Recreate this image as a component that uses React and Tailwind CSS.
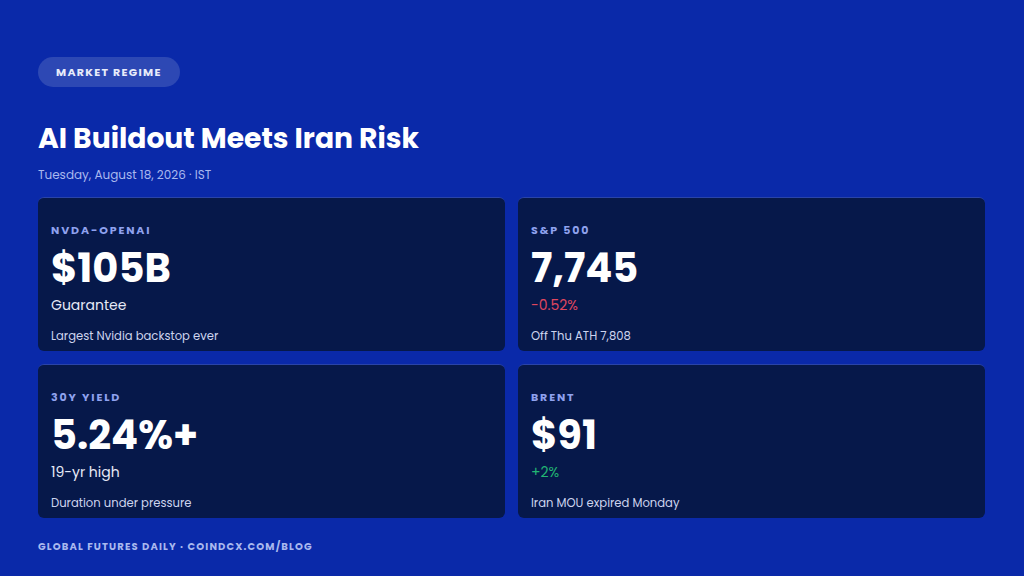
const cards = [
  { label: "NVDA-OPENAI", value: "$105B", note: "Guarantee", noteClass: "text-[#e6eaf7]", sub: "Largest Nvidia backstop ever" },
  { label: "S&P 500", value: "7,745", note: "-0.52%", noteClass: "text-[#e0475f]", sub: "Off Thu ATH 7,808" },
  { label: "30Y YIELD", value: "5.24%+", note: "19-yr high", noteClass: "text-[#e6eaf7]", sub: "Duration under pressure" },
  { label: "BRENT", value: "$91", note: "+2%", noteClass: "text-[#22b573]", sub: "Iran MOU expired Monday" },
];

function StatCard({ label, value, note, noteClass, sub }) {
  return (
    <div className="flex h-[154px] flex-col rounded-md border-t border-[#2a44a8] bg-[#06184a] px-[13px] pt-[24px]">
      <div className="text-[11px] font-bold leading-4 tracking-[0.17em] text-[#8fa2ef]">{label}</div>
      <div className="mt-[8px] text-[40px] font-bold leading-[44px] text-white">{value}</div>
      <div className={`mt-[5px] text-[14px] leading-5 ${noteClass}`}>{note}</div>
      <div className="mt-[13px] text-[11.6px] leading-4 text-[#cdd4ee]">{sub}</div>
    </div>
  );
}

export default function App() {
  return (
    <div
      className="flex h-[576px] w-[1024px] flex-col bg-[#0a29a9] px-[38px] pt-[57px]"
      style={{ fontFamily: "Poppins, Inter, 'Open Sans', sans-serif" }}
    >
      <div className="flex">
        <div className="flex h-[30px] items-center rounded-full bg-[#2d48b4] px-[18px] text-[11px] font-bold tracking-[0.12em] text-[#e8ecfa]">
          MARKET REGIME
        </div>
      </div>
      <h1 className="mt-[34px] text-[28.2px] font-bold leading-[34px] text-white">AI Buildout Meets Iran Risk</h1>
      <div className="mt-[12px] text-[12px] leading-4 text-[#a9b8ee]">Tuesday, August 18, 2026 · IST</div>
      <div className="mt-[14px] grid w-[947px] grid-cols-2 gap-x-[13px] gap-y-[13px]">
        {cards.map((c) => (
          <StatCard key={c.label} {...c} />
        ))}
      </div>
      <div className="mt-[21px] text-[10px] font-bold tracking-[0.115em] text-[#a9b8ee]">
        GLOBAL FUTURES DAILY · COINDCX.COM/BLOG
      </div>
    </div>
  );
}
